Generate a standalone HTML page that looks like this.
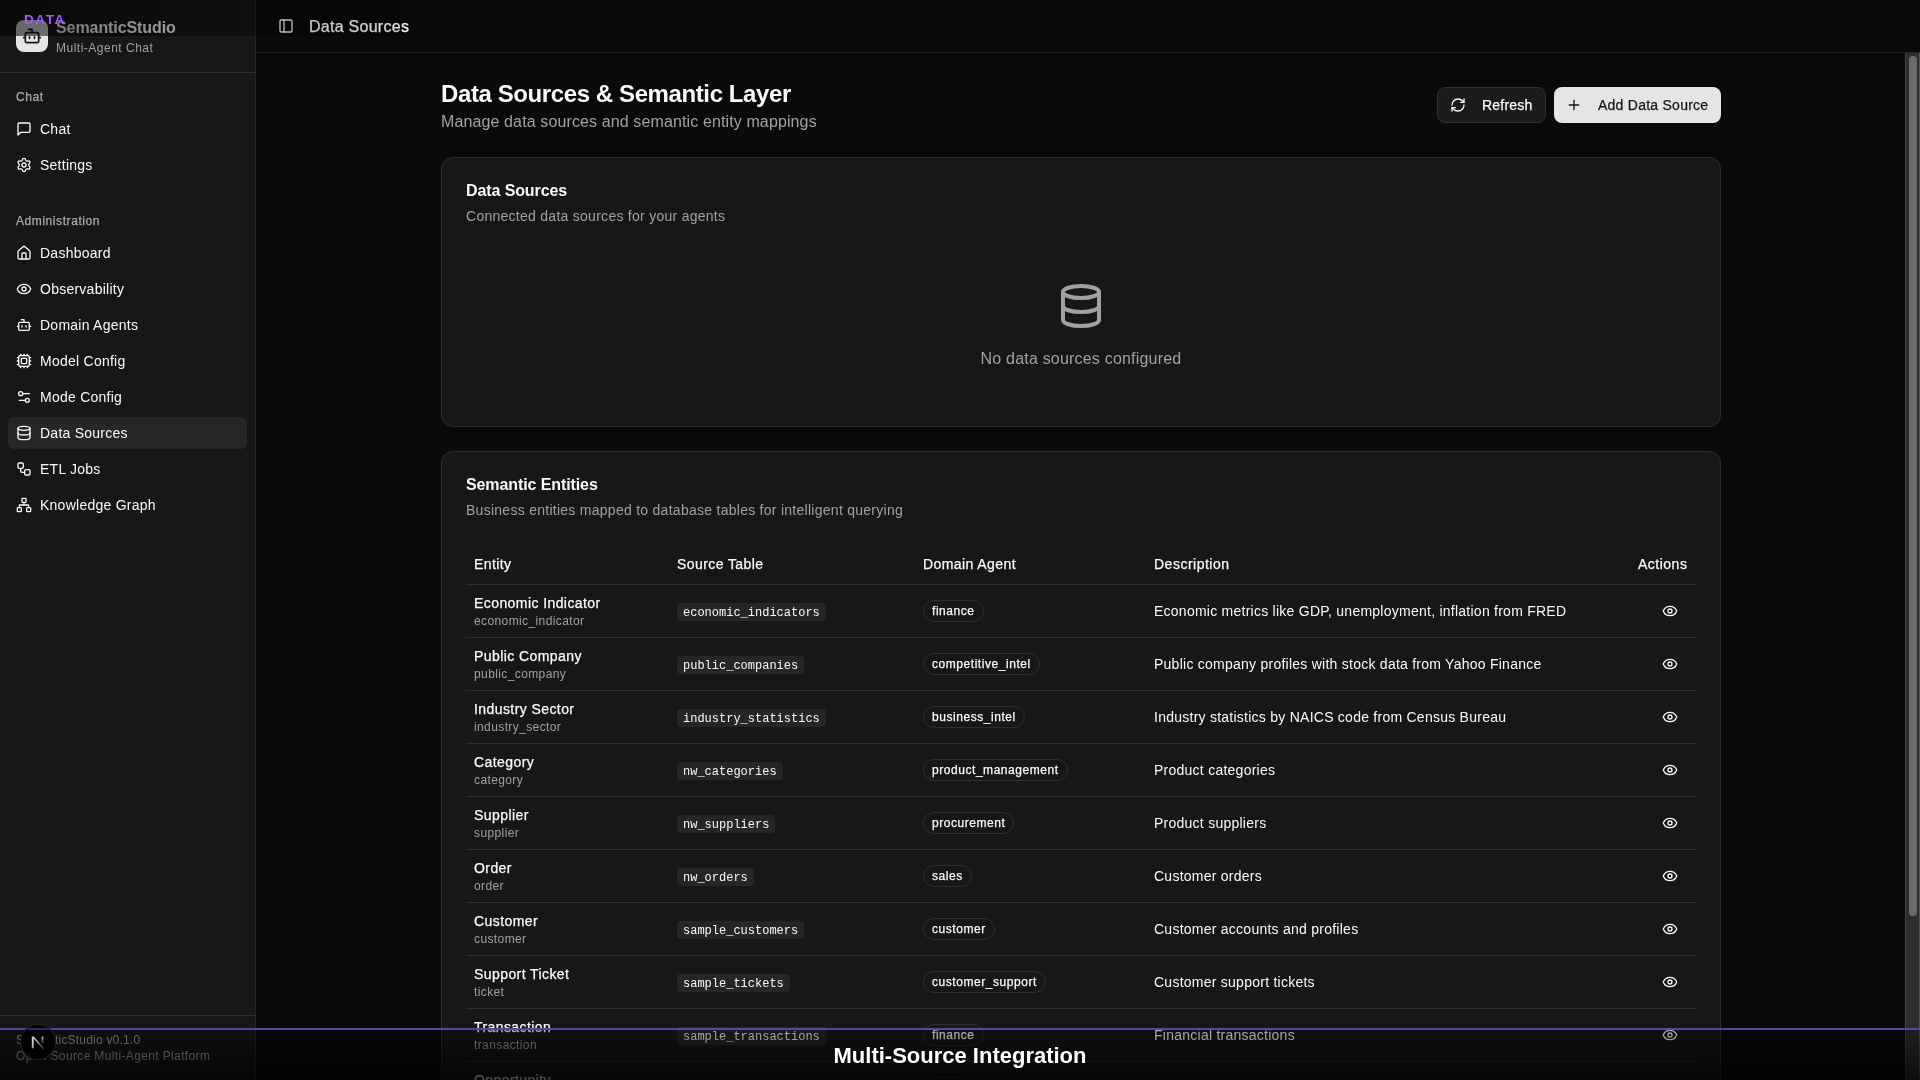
<!DOCTYPE html>
<html><head><meta charset="utf-8"><style>
html,body{margin:0;padding:0;}
body{width:1920px;height:1080px;overflow:hidden;background:#0a0a0a;position:relative;font-family:'Liberation Sans', sans-serif;}
.t{position:absolute;white-space:nowrap;will-change:transform;}
.b{position:absolute;}
.i{position:absolute;display:block;}
</style></head><body>
<div class="b" style="left:0px;top:0px;width:256px;height:1080px;background:#171717;border-radius:0px;border-right:1px solid #262626;box-sizing:border-box;"></div>
<div class="b" style="left:0px;top:72px;width:255px;height:1px;background:#2e2e2e;border-radius:0px;"></div>
<div class="b" style="left:16px;top:20px;width:32px;height:32px;background:#e5e5e5;border-radius:8px;"></div>
<svg class="i" style="left:22px;top:26px" width="20" height="20" viewBox="0 0 24 24" fill="none" stroke="#171717" stroke-width="2" stroke-linecap="round" stroke-linejoin="round"><path d="M12 8V4H8"/><rect width="16" height="12" x="4" y="8" rx="2"/><path d="M2 14h2"/><path d="M20 14h2"/><path d="M15 13v2"/><path d="M9 13v2"/></svg>
<div class="t" style="top:20.25px;font-size:16px;line-height:16px;color:#fafafa;font-weight:700;letter-spacing:-0.08px;left:56px;">SemanticStudio</div>
<div class="t" style="top:41.90px;font-size:12px;line-height:12px;color:#a1a1a1;font-weight:400;letter-spacing:0.5px;left:56px;">Multi-Agent Chat</div>
<div class="t" style="top:90.80px;font-size:12px;line-height:12px;color:#ababab;font-weight:400;-webkit-text-stroke:0.25px #ababab;letter-spacing:0.55px;left:16px;">Chat</div>
<div class="t" style="top:215.00px;font-size:12px;line-height:12px;color:#ababab;font-weight:400;-webkit-text-stroke:0.25px #ababab;letter-spacing:0.57px;left:16px;">Administration</div>
<div class="b" style="left:8px;top:417px;width:239px;height:32px;background:#262626;border-radius:6px;"></div>
<svg class="i" style="left:16px;top:121px" width="16" height="16" viewBox="0 0 24 24" fill="none" stroke="#fafafa" stroke-width="2" stroke-linecap="round" stroke-linejoin="round"><path d="M21 15a2 2 0 0 1-2 2H7l-4 4V5a2 2 0 0 1 2-2h14a2 2 0 0 1 2 2z"/></svg>
<div class="t" style="top:121.75px;font-size:14px;line-height:14px;color:#fafafa;font-weight:400;letter-spacing:0.25px;left:40px;">Chat</div>
<svg class="i" style="left:16px;top:157px" width="16" height="16" viewBox="0 0 24 24" fill="none" stroke="#fafafa" stroke-width="2" stroke-linecap="round" stroke-linejoin="round"><path d="M9.671 4.136a2.34 2.34 0 0 1 4.659 0 2.34 2.34 0 0 0 3.319 1.915 2.34 2.34 0 0 1 2.33 4.033 2.34 2.34 0 0 0 0 3.831 2.34 2.34 0 0 1-2.33 4.033 2.34 2.34 0 0 0-3.319 1.915 2.34 2.34 0 0 1-4.659 0 2.34 2.34 0 0 0-3.32-1.915 2.34 2.34 0 0 1-2.33-4.033 2.34 2.34 0 0 0 0-3.831A2.34 2.34 0 0 1 6.35 6.051a2.34 2.34 0 0 0 3.32-1.915"/><circle cx="12" cy="12" r="3"/></svg>
<div class="t" style="top:157.75px;font-size:14px;line-height:14px;color:#fafafa;font-weight:400;letter-spacing:0.25px;left:40px;">Settings</div>
<svg class="i" style="left:16px;top:245px" width="16" height="16" viewBox="0 0 24 24" fill="none" stroke="#fafafa" stroke-width="2" stroke-linecap="round" stroke-linejoin="round"><path d="M15 21v-8a1 1 0 0 0-1-1h-4a1 1 0 0 0-1 1v8"/><path d="M3 10a2 2 0 0 1 .709-1.528l7-5.999a2 2 0 0 1 2.582 0l7 5.999A2 2 0 0 1 21 10v9a2 2 0 0 1-2 2H5a2 2 0 0 1-2-2z"/></svg>
<div class="t" style="top:245.75px;font-size:14px;line-height:14px;color:#fafafa;font-weight:400;letter-spacing:0.25px;left:40px;">Dashboard</div>
<svg class="i" style="left:16px;top:281px" width="16" height="16" viewBox="0 0 24 24" fill="none" stroke="#fafafa" stroke-width="2" stroke-linecap="round" stroke-linejoin="round"><path d="M2.062 12.348a1 1 0 0 1 0-.696 10.75 10.75 0 0 1 19.876 0 1 1 0 0 1 0 .696 10.75 10.75 0 0 1-19.876 0"/><circle cx="12" cy="12" r="3"/></svg>
<div class="t" style="top:281.75px;font-size:14px;line-height:14px;color:#fafafa;font-weight:400;letter-spacing:0.25px;left:40px;">Observability</div>
<svg class="i" style="left:16px;top:317px" width="16" height="16" viewBox="0 0 24 24" fill="none" stroke="#fafafa" stroke-width="2" stroke-linecap="round" stroke-linejoin="round"><path d="M12 8V4H8"/><rect width="16" height="12" x="4" y="8" rx="2"/><path d="M2 14h2"/><path d="M20 14h2"/><path d="M15 13v2"/><path d="M9 13v2"/></svg>
<div class="t" style="top:317.75px;font-size:14px;line-height:14px;color:#fafafa;font-weight:400;letter-spacing:0.25px;left:40px;">Domain Agents</div>
<svg class="i" style="left:16px;top:353px" width="16" height="16" viewBox="0 0 24 24" fill="none" stroke="#fafafa" stroke-width="2" stroke-linecap="round" stroke-linejoin="round"><path d="M12 20v2"/><path d="M12 2v2"/><path d="M17 20v2"/><path d="M17 2v2"/><path d="M2 12h2"/><path d="M2 17h2"/><path d="M2 7h2"/><path d="M20 12h2"/><path d="M20 17h2"/><path d="M20 7h2"/><path d="M7 20v2"/><path d="M7 2v2"/><rect x="4" y="4" width="16" height="16" rx="2"/><rect x="8" y="8" width="8" height="8" rx="1"/></svg>
<div class="t" style="top:353.75px;font-size:14px;line-height:14px;color:#fafafa;font-weight:400;letter-spacing:0.25px;left:40px;">Model Config</div>
<svg class="i" style="left:16px;top:389px" width="16" height="16" viewBox="0 0 24 24" fill="none" stroke="#fafafa" stroke-width="2" stroke-linecap="round" stroke-linejoin="round"><path d="M20 7h-9"/><path d="M14 17H5"/><circle cx="17" cy="17" r="3"/><circle cx="7" cy="7" r="3"/></svg>
<div class="t" style="top:389.75px;font-size:14px;line-height:14px;color:#fafafa;font-weight:400;letter-spacing:0.25px;left:40px;">Mode Config</div>
<svg class="i" style="left:16px;top:425px" width="16" height="16" viewBox="0 0 24 24" fill="none" stroke="#fafafa" stroke-width="2" stroke-linecap="round" stroke-linejoin="round"><ellipse cx="12" cy="5" rx="9" ry="3"/><path d="M3 5V19A9 3 0 0 0 21 19V5"/><path d="M3 12A9 3 0 0 0 21 12"/></svg>
<div class="t" style="top:425.75px;font-size:14px;line-height:14px;color:#fafafa;font-weight:400;letter-spacing:0.25px;left:40px;">Data Sources</div>
<svg class="i" style="left:16px;top:461px" width="16" height="16" viewBox="0 0 24 24" fill="none" stroke="#fafafa" stroke-width="2" stroke-linecap="round" stroke-linejoin="round"><rect width="8" height="8" x="3" y="3" rx="2"/><path d="M7 11v4a2 2 0 0 0 2 2h4"/><rect width="8" height="8" x="13" y="13" rx="2"/></svg>
<div class="t" style="top:461.75px;font-size:14px;line-height:14px;color:#fafafa;font-weight:400;letter-spacing:0.25px;left:40px;">ETL Jobs</div>
<svg class="i" style="left:16px;top:497px" width="16" height="16" viewBox="0 0 24 24" fill="none" stroke="#fafafa" stroke-width="2" stroke-linecap="round" stroke-linejoin="round"><rect x="16" y="16" width="6" height="6" rx="1"/><rect x="2" y="16" width="6" height="6" rx="1"/><rect x="9" y="2" width="6" height="6" rx="1"/><path d="M5 16v-3a1 1 0 0 1 1-1h12a1 1 0 0 1 1 1v3"/><path d="M12 12V8"/></svg>
<div class="t" style="top:497.75px;font-size:14px;line-height:14px;color:#fafafa;font-weight:400;letter-spacing:0.25px;left:40px;">Knowledge Graph</div>
<div class="b" style="left:0px;top:1015px;width:255px;height:1px;background:#2e2e2e;border-radius:0px;"></div>
<div class="t" style="top:1034.00px;font-size:12px;line-height:12px;color:#a1a1a1;font-weight:400;letter-spacing:0.2px;left:16px;">SemanticStudio v0.1.0</div>
<div class="t" style="top:1049.60px;font-size:12px;line-height:12px;color:#a1a1a1;font-weight:400;letter-spacing:0.36px;left:16px;">Open Source Multi-Agent Platform</div>
<div class="b" style="left:256px;top:52px;width:1664px;height:1px;background:#222222;border-radius:0px;"></div>
<svg class="i" style="left:278px;top:18px" width="16" height="16" viewBox="0 0 24 24" fill="none" stroke="#fafafa" stroke-width="2" stroke-linecap="round" stroke-linejoin="round"><rect width="18" height="18" x="3" y="3" rx="2"/><path d="M9 3v18"/></svg>
<div class="t" style="top:18.50px;font-size:16px;line-height:16px;color:#fafafa;font-weight:400;-webkit-text-stroke:0.25px #fafafa;letter-spacing:0.27px;left:309px;">Data Sources</div>
<div class="t" style="top:82.40px;font-size:24px;line-height:24px;color:#fafafa;font-weight:700;letter-spacing:-0.4px;left:441px;">Data Sources &amp; Semantic Layer</div>
<div class="t" style="top:113.50px;font-size:16px;line-height:16px;color:#a1a1a1;font-weight:400;letter-spacing:0.12px;left:441px;">Manage data sources and semantic entity mappings</div>
<div class="b" style="left:1437px;top:87px;width:109px;height:36px;background:#1b1b1b;border-radius:8px;border:1px solid #303030;box-sizing:border-box;"></div>
<svg class="i" style="left:1450px;top:97px" width="16" height="16" viewBox="0 0 24 24" fill="none" stroke="#fafafa" stroke-width="2" stroke-linecap="round" stroke-linejoin="round"><path d="M3 12a9 9 0 0 1 9-9 9.75 9.75 0 0 1 6.74 2.74L21 8"/><path d="M21 3v5h-5"/><path d="M21 12a9 9 0 0 1-9 9 9.75 9.75 0 0 1-6.74-2.74L3 16"/><path d="M8 16H3v5"/></svg>
<div class="t" style="top:98.00px;font-size:14px;line-height:14px;color:#fafafa;font-weight:400;-webkit-text-stroke:0.25px #fafafa;letter-spacing:0.2px;left:1482px;">Refresh</div>
<div class="b" style="left:1554px;top:87px;width:167px;height:36px;background:#e5e5e5;border-radius:8px;"></div>
<svg class="i" style="left:1566px;top:97px" width="16" height="16" viewBox="0 0 24 24" fill="none" stroke="#171717" stroke-width="2" stroke-linecap="round" stroke-linejoin="round"><path d="M5 12h14"/><path d="M12 5v14"/></svg>
<div class="t" style="top:98.00px;font-size:14px;line-height:14px;color:#171717;font-weight:400;-webkit-text-stroke:0.25px #171717;letter-spacing:0.25px;left:1598px;">Add Data Source</div>
<div class="b" style="left:441px;top:157px;width:1280px;height:270px;background:#171717;border-radius:12px;border:1px solid #2e2e2e;box-sizing:border-box;"></div>
<div class="t" style="top:182.50px;font-size:16px;line-height:16px;color:#fafafa;font-weight:700;letter-spacing:-0.1px;left:466px;">Data Sources</div>
<div class="t" style="top:209.00px;font-size:14px;line-height:14px;color:#a1a1a1;font-weight:400;letter-spacing:0.27px;left:466px;">Connected data sources for your agents</div>
<svg class="i" style="left:1057px;top:282px" width="48" height="48" viewBox="0 0 24 24" fill="none" stroke="#a1a1a1" stroke-width="2" stroke-linecap="round" stroke-linejoin="round"><ellipse cx="12" cy="5" rx="9" ry="3"/><path d="M3 5V19A9 3 0 0 0 21 19V5"/><path d="M3 12A9 3 0 0 0 21 12"/></svg>
<div class="t" style="top:350.50px;font-size:16px;line-height:16px;color:#a1a1a1;font-weight:400;letter-spacing:0.2px;left:581px;width:1000px;text-align:center;">No data sources configured</div>
<div class="b" style="left:441px;top:451px;width:1280px;height:700px;background:#171717;border-radius:12px;border:1px solid #2e2e2e;box-sizing:border-box;"></div>
<div class="t" style="top:476.50px;font-size:16px;line-height:16px;color:#fafafa;font-weight:700;letter-spacing:-0.1px;left:466px;">Semantic Entities</div>
<div class="t" style="top:503.00px;font-size:14px;line-height:14px;color:#a1a1a1;font-weight:400;letter-spacing:0.27px;left:466px;">Business entities mapped to database tables for intelligent querying</div>
<div class="t" style="top:557.20px;font-size:14px;line-height:14px;color:#fafafa;font-weight:400;-webkit-text-stroke:0.25px #fafafa;letter-spacing:0.42px;left:474px;">Entity</div>
<div class="t" style="top:557.20px;font-size:14px;line-height:14px;color:#fafafa;font-weight:400;-webkit-text-stroke:0.25px #fafafa;letter-spacing:0.42px;left:677px;">Source Table</div>
<div class="t" style="top:557.20px;font-size:14px;line-height:14px;color:#fafafa;font-weight:400;-webkit-text-stroke:0.25px #fafafa;letter-spacing:0.42px;left:923px;">Domain Agent</div>
<div class="t" style="top:557.20px;font-size:14px;line-height:14px;color:#fafafa;font-weight:400;-webkit-text-stroke:0.25px #fafafa;letter-spacing:0.5px;left:1154px;">Description</div>
<div class="t" style="top:557.20px;font-size:14px;line-height:14px;color:#fafafa;font-weight:400;-webkit-text-stroke:0.25px #fafafa;letter-spacing:0.5px;right:233px;">Actions</div>
<div class="b" style="left:466px;top:584px;width:1230px;height:1px;background:#2e2e2e;border-radius:0px;"></div>
<div class="t" style="top:596.00px;font-size:14px;line-height:14px;color:#fafafa;font-weight:400;-webkit-text-stroke:0.25px #fafafa;letter-spacing:0.42px;left:474px;">Economic Indicator</div>
<div class="t" style="top:614.70px;font-size:12px;line-height:12px;color:#a1a1a1;font-weight:400;letter-spacing:0.39px;left:474px;">economic_indicator</div>
<div class="b" style="left:677px;top:603px;width:149px;height:18px;background:#262626;border-radius:4px;"></div>
<div class="t" style="top:606.80px;font-size:12px;line-height:12px;color:#fafafa;font-weight:400;font-family:'Liberation Mono', monospace;left:683px;">economic_indicators</div>
<div class="b" style="left:923px;top:600px;width:61px;height:22px;background:transparent;border-radius:11px;border:1px solid #2e2e2e;box-sizing:border-box;"></div>
<div class="t" style="top:604.80px;font-size:12px;line-height:12px;color:#fafafa;font-weight:400;-webkit-text-stroke:0.25px #fafafa;letter-spacing:0.55px;left:932px;">finance</div>
<div class="t" style="top:604.20px;font-size:14px;line-height:14px;color:#fafafa;font-weight:400;letter-spacing:0.25px;left:1154px;">Economic metrics like GDP, unemployment, inflation from FRED</div>
<svg class="i" style="left:1662px;top:603px" width="16" height="16" viewBox="0 0 24 24" fill="none" stroke="#fafafa" stroke-width="2" stroke-linecap="round" stroke-linejoin="round"><path d="M2.062 12.348a1 1 0 0 1 0-.696 10.75 10.75 0 0 1 19.876 0 1 1 0 0 1 0 .696 10.75 10.75 0 0 1-19.876 0"/><circle cx="12" cy="12" r="3"/></svg>
<div class="b" style="left:466px;top:637px;width:1230px;height:1px;background:#2e2e2e;border-radius:0px;"></div>
<div class="t" style="top:649.00px;font-size:14px;line-height:14px;color:#fafafa;font-weight:400;-webkit-text-stroke:0.25px #fafafa;letter-spacing:0.42px;left:474px;">Public Company</div>
<div class="t" style="top:667.70px;font-size:12px;line-height:12px;color:#a1a1a1;font-weight:400;letter-spacing:0.39px;left:474px;">public_company</div>
<div class="b" style="left:677px;top:656px;width:127px;height:18px;background:#262626;border-radius:4px;"></div>
<div class="t" style="top:659.80px;font-size:12px;line-height:12px;color:#fafafa;font-weight:400;font-family:'Liberation Mono', monospace;left:683px;">public_companies</div>
<div class="b" style="left:923px;top:653px;width:117px;height:22px;background:transparent;border-radius:11px;border:1px solid #2e2e2e;box-sizing:border-box;"></div>
<div class="t" style="top:657.80px;font-size:12px;line-height:12px;color:#fafafa;font-weight:400;-webkit-text-stroke:0.25px #fafafa;letter-spacing:0.55px;left:932px;">competitive_intel</div>
<div class="t" style="top:657.20px;font-size:14px;line-height:14px;color:#fafafa;font-weight:400;letter-spacing:0.25px;left:1154px;">Public company profiles with stock data from Yahoo Finance</div>
<svg class="i" style="left:1662px;top:656px" width="16" height="16" viewBox="0 0 24 24" fill="none" stroke="#fafafa" stroke-width="2" stroke-linecap="round" stroke-linejoin="round"><path d="M2.062 12.348a1 1 0 0 1 0-.696 10.75 10.75 0 0 1 19.876 0 1 1 0 0 1 0 .696 10.75 10.75 0 0 1-19.876 0"/><circle cx="12" cy="12" r="3"/></svg>
<div class="b" style="left:466px;top:690px;width:1230px;height:1px;background:#2e2e2e;border-radius:0px;"></div>
<div class="t" style="top:702.00px;font-size:14px;line-height:14px;color:#fafafa;font-weight:400;-webkit-text-stroke:0.25px #fafafa;letter-spacing:0.42px;left:474px;">Industry Sector</div>
<div class="t" style="top:720.70px;font-size:12px;line-height:12px;color:#a1a1a1;font-weight:400;letter-spacing:0.39px;left:474px;">industry_sector</div>
<div class="b" style="left:677px;top:709px;width:149px;height:18px;background:#262626;border-radius:4px;"></div>
<div class="t" style="top:712.80px;font-size:12px;line-height:12px;color:#fafafa;font-weight:400;font-family:'Liberation Mono', monospace;left:683px;">industry_statistics</div>
<div class="b" style="left:923px;top:706px;width:102px;height:22px;background:transparent;border-radius:11px;border:1px solid #2e2e2e;box-sizing:border-box;"></div>
<div class="t" style="top:710.80px;font-size:12px;line-height:12px;color:#fafafa;font-weight:400;-webkit-text-stroke:0.25px #fafafa;letter-spacing:0.55px;left:932px;">business_intel</div>
<div class="t" style="top:710.20px;font-size:14px;line-height:14px;color:#fafafa;font-weight:400;letter-spacing:0.25px;left:1154px;">Industry statistics by NAICS code from Census Bureau</div>
<svg class="i" style="left:1662px;top:709px" width="16" height="16" viewBox="0 0 24 24" fill="none" stroke="#fafafa" stroke-width="2" stroke-linecap="round" stroke-linejoin="round"><path d="M2.062 12.348a1 1 0 0 1 0-.696 10.75 10.75 0 0 1 19.876 0 1 1 0 0 1 0 .696 10.75 10.75 0 0 1-19.876 0"/><circle cx="12" cy="12" r="3"/></svg>
<div class="b" style="left:466px;top:743px;width:1230px;height:1px;background:#2e2e2e;border-radius:0px;"></div>
<div class="t" style="top:755.00px;font-size:14px;line-height:14px;color:#fafafa;font-weight:400;-webkit-text-stroke:0.25px #fafafa;letter-spacing:0.42px;left:474px;">Category</div>
<div class="t" style="top:773.70px;font-size:12px;line-height:12px;color:#a1a1a1;font-weight:400;letter-spacing:0.39px;left:474px;">category</div>
<div class="b" style="left:677px;top:762px;width:106px;height:18px;background:#262626;border-radius:4px;"></div>
<div class="t" style="top:765.80px;font-size:12px;line-height:12px;color:#fafafa;font-weight:400;font-family:'Liberation Mono', monospace;left:683px;">nw_categories</div>
<div class="b" style="left:923px;top:759px;width:145px;height:22px;background:transparent;border-radius:11px;border:1px solid #2e2e2e;box-sizing:border-box;"></div>
<div class="t" style="top:763.80px;font-size:12px;line-height:12px;color:#fafafa;font-weight:400;-webkit-text-stroke:0.25px #fafafa;letter-spacing:0.55px;left:932px;">product_management</div>
<div class="t" style="top:763.20px;font-size:14px;line-height:14px;color:#fafafa;font-weight:400;letter-spacing:0.25px;left:1154px;">Product categories</div>
<svg class="i" style="left:1662px;top:762px" width="16" height="16" viewBox="0 0 24 24" fill="none" stroke="#fafafa" stroke-width="2" stroke-linecap="round" stroke-linejoin="round"><path d="M2.062 12.348a1 1 0 0 1 0-.696 10.75 10.75 0 0 1 19.876 0 1 1 0 0 1 0 .696 10.75 10.75 0 0 1-19.876 0"/><circle cx="12" cy="12" r="3"/></svg>
<div class="b" style="left:466px;top:796px;width:1230px;height:1px;background:#2e2e2e;border-radius:0px;"></div>
<div class="t" style="top:808.00px;font-size:14px;line-height:14px;color:#fafafa;font-weight:400;-webkit-text-stroke:0.25px #fafafa;letter-spacing:0.42px;left:474px;">Supplier</div>
<div class="t" style="top:826.70px;font-size:12px;line-height:12px;color:#a1a1a1;font-weight:400;letter-spacing:0.39px;left:474px;">supplier</div>
<div class="b" style="left:677px;top:815px;width:98px;height:18px;background:#262626;border-radius:4px;"></div>
<div class="t" style="top:818.80px;font-size:12px;line-height:12px;color:#fafafa;font-weight:400;font-family:'Liberation Mono', monospace;left:683px;">nw_suppliers</div>
<div class="b" style="left:923px;top:812px;width:91px;height:22px;background:transparent;border-radius:11px;border:1px solid #2e2e2e;box-sizing:border-box;"></div>
<div class="t" style="top:816.80px;font-size:12px;line-height:12px;color:#fafafa;font-weight:400;-webkit-text-stroke:0.25px #fafafa;letter-spacing:0.55px;left:932px;">procurement</div>
<div class="t" style="top:816.20px;font-size:14px;line-height:14px;color:#fafafa;font-weight:400;letter-spacing:0.25px;left:1154px;">Product suppliers</div>
<svg class="i" style="left:1662px;top:815px" width="16" height="16" viewBox="0 0 24 24" fill="none" stroke="#fafafa" stroke-width="2" stroke-linecap="round" stroke-linejoin="round"><path d="M2.062 12.348a1 1 0 0 1 0-.696 10.75 10.75 0 0 1 19.876 0 1 1 0 0 1 0 .696 10.75 10.75 0 0 1-19.876 0"/><circle cx="12" cy="12" r="3"/></svg>
<div class="b" style="left:466px;top:849px;width:1230px;height:1px;background:#2e2e2e;border-radius:0px;"></div>
<div class="t" style="top:861.00px;font-size:14px;line-height:14px;color:#fafafa;font-weight:400;-webkit-text-stroke:0.25px #fafafa;letter-spacing:0.42px;left:474px;">Order</div>
<div class="t" style="top:879.70px;font-size:12px;line-height:12px;color:#a1a1a1;font-weight:400;letter-spacing:0.39px;left:474px;">order</div>
<div class="b" style="left:677px;top:868px;width:77px;height:18px;background:#262626;border-radius:4px;"></div>
<div class="t" style="top:871.80px;font-size:12px;line-height:12px;color:#fafafa;font-weight:400;font-family:'Liberation Mono', monospace;left:683px;">nw_orders</div>
<div class="b" style="left:923px;top:865px;width:49px;height:22px;background:transparent;border-radius:11px;border:1px solid #2e2e2e;box-sizing:border-box;"></div>
<div class="t" style="top:869.80px;font-size:12px;line-height:12px;color:#fafafa;font-weight:400;-webkit-text-stroke:0.25px #fafafa;letter-spacing:0.55px;left:932px;">sales</div>
<div class="t" style="top:869.20px;font-size:14px;line-height:14px;color:#fafafa;font-weight:400;letter-spacing:0.25px;left:1154px;">Customer orders</div>
<svg class="i" style="left:1662px;top:868px" width="16" height="16" viewBox="0 0 24 24" fill="none" stroke="#fafafa" stroke-width="2" stroke-linecap="round" stroke-linejoin="round"><path d="M2.062 12.348a1 1 0 0 1 0-.696 10.75 10.75 0 0 1 19.876 0 1 1 0 0 1 0 .696 10.75 10.75 0 0 1-19.876 0"/><circle cx="12" cy="12" r="3"/></svg>
<div class="b" style="left:466px;top:902px;width:1230px;height:1px;background:#2e2e2e;border-radius:0px;"></div>
<div class="t" style="top:914.00px;font-size:14px;line-height:14px;color:#fafafa;font-weight:400;-webkit-text-stroke:0.25px #fafafa;letter-spacing:0.42px;left:474px;">Customer</div>
<div class="t" style="top:932.70px;font-size:12px;line-height:12px;color:#a1a1a1;font-weight:400;letter-spacing:0.39px;left:474px;">customer</div>
<div class="b" style="left:677px;top:921px;width:127px;height:18px;background:#262626;border-radius:4px;"></div>
<div class="t" style="top:924.80px;font-size:12px;line-height:12px;color:#fafafa;font-weight:400;font-family:'Liberation Mono', monospace;left:683px;">sample_customers</div>
<div class="b" style="left:923px;top:918px;width:72px;height:22px;background:transparent;border-radius:11px;border:1px solid #2e2e2e;box-sizing:border-box;"></div>
<div class="t" style="top:922.80px;font-size:12px;line-height:12px;color:#fafafa;font-weight:400;-webkit-text-stroke:0.25px #fafafa;letter-spacing:0.55px;left:932px;">customer</div>
<div class="t" style="top:922.20px;font-size:14px;line-height:14px;color:#fafafa;font-weight:400;letter-spacing:0.25px;left:1154px;">Customer accounts and profiles</div>
<svg class="i" style="left:1662px;top:921px" width="16" height="16" viewBox="0 0 24 24" fill="none" stroke="#fafafa" stroke-width="2" stroke-linecap="round" stroke-linejoin="round"><path d="M2.062 12.348a1 1 0 0 1 0-.696 10.75 10.75 0 0 1 19.876 0 1 1 0 0 1 0 .696 10.75 10.75 0 0 1-19.876 0"/><circle cx="12" cy="12" r="3"/></svg>
<div class="b" style="left:466px;top:955px;width:1230px;height:1px;background:#2e2e2e;border-radius:0px;"></div>
<div class="t" style="top:967.00px;font-size:14px;line-height:14px;color:#fafafa;font-weight:400;-webkit-text-stroke:0.25px #fafafa;letter-spacing:0.42px;left:474px;">Support Ticket</div>
<div class="t" style="top:985.70px;font-size:12px;line-height:12px;color:#a1a1a1;font-weight:400;letter-spacing:0.39px;left:474px;">ticket</div>
<div class="b" style="left:677px;top:974px;width:113px;height:18px;background:#262626;border-radius:4px;"></div>
<div class="t" style="top:977.80px;font-size:12px;line-height:12px;color:#fafafa;font-weight:400;font-family:'Liberation Mono', monospace;left:683px;">sample_tickets</div>
<div class="b" style="left:923px;top:971px;width:123px;height:22px;background:transparent;border-radius:11px;border:1px solid #2e2e2e;box-sizing:border-box;"></div>
<div class="t" style="top:975.80px;font-size:12px;line-height:12px;color:#fafafa;font-weight:400;-webkit-text-stroke:0.25px #fafafa;letter-spacing:0.55px;left:932px;">customer_support</div>
<div class="t" style="top:975.20px;font-size:14px;line-height:14px;color:#fafafa;font-weight:400;letter-spacing:0.25px;left:1154px;">Customer support tickets</div>
<svg class="i" style="left:1662px;top:974px" width="16" height="16" viewBox="0 0 24 24" fill="none" stroke="#fafafa" stroke-width="2" stroke-linecap="round" stroke-linejoin="round"><path d="M2.062 12.348a1 1 0 0 1 0-.696 10.75 10.75 0 0 1 19.876 0 1 1 0 0 1 0 .696 10.75 10.75 0 0 1-19.876 0"/><circle cx="12" cy="12" r="3"/></svg>
<div class="b" style="left:466px;top:1008px;width:1230px;height:1px;background:#2e2e2e;border-radius:0px;"></div>
<div class="t" style="top:1020.00px;font-size:14px;line-height:14px;color:#fafafa;font-weight:400;-webkit-text-stroke:0.25px #fafafa;letter-spacing:0.42px;left:474px;">Transaction</div>
<div class="t" style="top:1038.70px;font-size:12px;line-height:12px;color:#a1a1a1;font-weight:400;letter-spacing:0.39px;left:474px;">transaction</div>
<div class="b" style="left:677px;top:1027px;width:149px;height:18px;background:#262626;border-radius:4px;"></div>
<div class="t" style="top:1030.80px;font-size:12px;line-height:12px;color:#fafafa;font-weight:400;font-family:'Liberation Mono', monospace;left:683px;">sample_transactions</div>
<div class="b" style="left:923px;top:1024px;width:61px;height:22px;background:transparent;border-radius:11px;border:1px solid #2e2e2e;box-sizing:border-box;"></div>
<div class="t" style="top:1028.80px;font-size:12px;line-height:12px;color:#fafafa;font-weight:400;-webkit-text-stroke:0.25px #fafafa;letter-spacing:0.55px;left:932px;">finance</div>
<div class="t" style="top:1028.20px;font-size:14px;line-height:14px;color:#fafafa;font-weight:400;letter-spacing:0.25px;left:1154px;">Financial transactions</div>
<svg class="i" style="left:1662px;top:1027px" width="16" height="16" viewBox="0 0 24 24" fill="none" stroke="#fafafa" stroke-width="2" stroke-linecap="round" stroke-linejoin="round"><path d="M2.062 12.348a1 1 0 0 1 0-.696 10.75 10.75 0 0 1 19.876 0 1 1 0 0 1 0 .696 10.75 10.75 0 0 1-19.876 0"/><circle cx="12" cy="12" r="3"/></svg>
<div class="b" style="left:466px;top:1061px;width:1230px;height:1px;background:#2e2e2e;border-radius:0px;"></div>
<div class="t" style="top:1073.00px;font-size:14px;line-height:14px;color:#fafafa;font-weight:400;-webkit-text-stroke:0.25px #fafafa;letter-spacing:0.42px;left:474px;">Opportunity</div>
<div class="t" style="top:1091.70px;font-size:12px;line-height:12px;color:#a1a1a1;font-weight:400;letter-spacing:0.39px;left:474px;">opportunity</div>
<div class="b" style="left:677px;top:1080px;width:156px;height:18px;background:#262626;border-radius:4px;"></div>
<div class="t" style="top:1083.80px;font-size:12px;line-height:12px;color:#fafafa;font-weight:400;font-family:'Liberation Mono', monospace;left:683px;">sample_opportunities</div>
<div class="b" style="left:923px;top:1077px;width:49px;height:22px;background:transparent;border-radius:11px;border:1px solid #2e2e2e;box-sizing:border-box;"></div>
<div class="t" style="top:1081.80px;font-size:12px;line-height:12px;color:#fafafa;font-weight:400;-webkit-text-stroke:0.25px #fafafa;letter-spacing:0.55px;left:932px;">sales</div>
<div class="t" style="top:1081.20px;font-size:14px;line-height:14px;color:#fafafa;font-weight:400;letter-spacing:0.25px;left:1154px;">Sales opportunities</div>
<svg class="i" style="left:1662px;top:1080px" width="16" height="16" viewBox="0 0 24 24" fill="none" stroke="#fafafa" stroke-width="2" stroke-linecap="round" stroke-linejoin="round"><path d="M2.062 12.348a1 1 0 0 1 0-.696 10.75 10.75 0 0 1 19.876 0 1 1 0 0 1 0 .696 10.75 10.75 0 0 1-19.876 0"/><circle cx="12" cy="12" r="3"/></svg>
<div class="b" style="left:466px;top:1114px;width:1230px;height:1px;background:#2e2e2e;border-radius:0px;"></div>
<div class="b" style="left:1905px;top:53px;width:15px;height:1027px;background:#2e2e2e;border-radius:0px;border-left:1px solid #444;border-right:1px solid #555;box-sizing:border-box;"></div>
<div class="b" style="left:1909px;top:56px;width:8px;height:860px;background:#6b6b6b;border-radius:4px;"></div>
<div class="b" style="left:0px;top:0px;width:400px;height:36px;background:linear-gradient(to right, rgba(0,0,0,0.58), rgba(0,0,0,0.12));border-radius:0px;"></div>
<div class="t" style="top:12.60px;font-size:13.6px;line-height:13.6px;color:#9d5cff;font-weight:700;letter-spacing:1.55px;left:24.3px;">DATA</div>
<div class="b" style="left:0px;top:1028px;width:1920px;height:52px;background:linear-gradient(to bottom, rgba(0,0,0,0.3), rgba(0,0,0,0.72));border-radius:0px;border-top:2px solid #5f40a8;box-sizing:border-box;"></div>
<div class="t" style="top:1044.50px;font-size:22px;line-height:22px;color:#ffffff;font-weight:700;left:460px;width:1000px;text-align:center;">Multi-Source Integration</div>
<div class="b" style="left:20px;top:1024px;width:36px;height:36px;box-sizing:border-box;border-radius:18px;background:#020202;border:1px solid rgba(255,255,255,0.12);overflow:hidden"><div class="b" style="left:0;top:3px;width:36px;height:2px;background:rgba(118,78,212,0.45)"></div></div>
<svg class="i" style="left:20px;top:1024px" width="36" height="36" viewBox="0 0 36 36"><defs><linearGradient id="ng" x1="0" y1="0" x2="1" y2="1"><stop offset="0.3" stop-color="#fff"/><stop offset="1" stop-color="#fff" stop-opacity="0.15"/></linearGradient><linearGradient id="ng2" x1="0" y1="0" x2="0" y2="1"><stop offset="0" stop-color="#fff"/><stop offset="0.8" stop-color="#fff" stop-opacity="0"/></linearGradient></defs><path d="M11.8 12.6 H13.7 L24.2 24.6 L23.2 25.4 L13.7 14.6 V24.2 H11.8 Z" fill="url(#ng)" opacity="0.8"/><rect x="21.6" y="12.6" width="1.8" height="10" fill="url(#ng2)" opacity="0.8"/></svg>
</body></html>
